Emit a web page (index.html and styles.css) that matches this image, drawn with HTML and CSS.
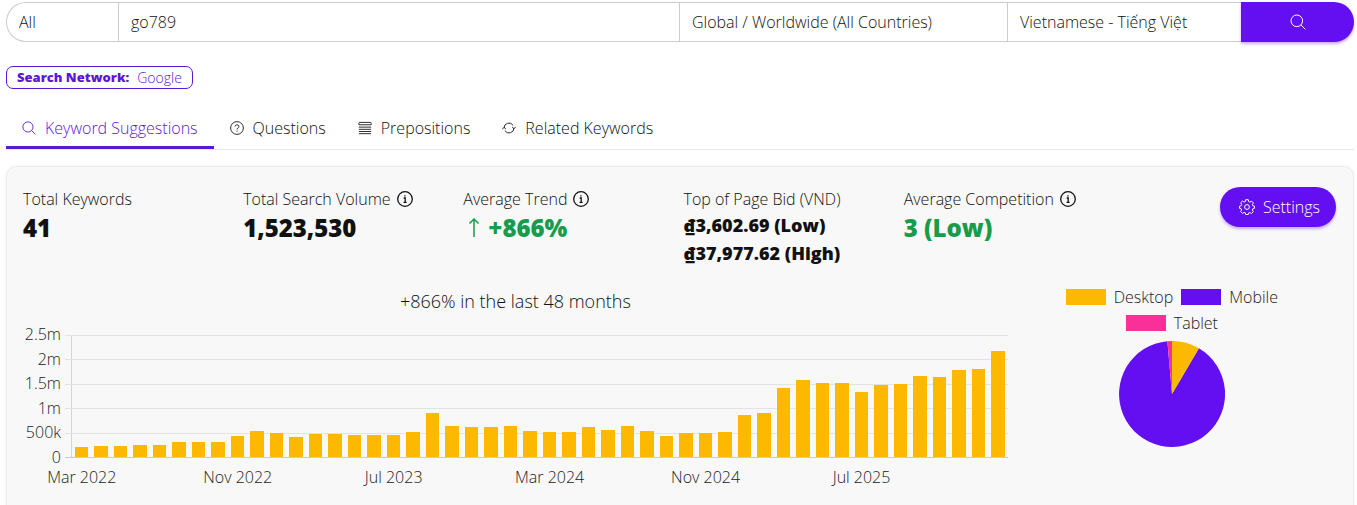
FILE: index.html
```html
<!DOCTYPE html>
<html lang="en">
<head>
<meta charset="utf-8">
<title>Keyword Suggestions</title>
<link rel="stylesheet" href="styles.css">
</head>
<body>
<svg class="sprite" aria-hidden="true">
  <symbol id="search" viewBox="0 0 16 16"><circle cx="6.8" cy="6.8" r="5.8"/><path d="M11 11l4.4 4.4"/></symbol>
  <symbol id="question" viewBox="0 0 16 16"><circle cx="8" cy="8" r="7.3"/><path d="M5.8 6.3a2.2 2 0 1 1 3.3 1.8C8.300 8.600 8 8.900 8 9.800M8 11v1.200"/></symbol>
  <symbol id="lines" viewBox="0 0 16 16"><path d="M1 4.300V2.500Q1 1.600 2 1.600H14Q15 1.600 15 2.500V4.300ZM1 7h14M1 9.500h14M1 12h14M1 14.500h14"/></symbol>
  <symbol id="refresh" viewBox="0 0 16 16"><path d="M2.300 8A5.700 5.700 0 0 1 12.800 5M13.700 8A5.700 5.700 0 0 1 3.200 11M.3 9.500L2.300 7.200 4.500 9.300M11.500 6.700L13.700 8.800 15.700 6.500"/></symbol>
  <symbol id="info" viewBox="0 0 16 16"><circle cx="8" cy="8" r="7.300"/><path d="M6.700 7h1.500v4.200M6.600 11.400h3"/><path d="M7.900 4.200v1.300"/></symbol>
  <symbol id="up" viewBox="0 0 12 20"><path d="M6 19V1M1.500 5.500L6 1l4.500 4.500"/></symbol>
  <symbol id="gear" viewBox="0 0 16 16"><circle cx="8" cy="8" r="2.400"/><path d="M6.700 .7h2.600l.4 1.900 1.200.5 1.700-1 1.800 1.800-1 1.700.5 1.200 1.500.3v2.300l-1.600.4-.5 1.200 1 1.700-1.800 1.800-1.700-1-1.200.5-.4 1.500H6.700l-.4-1.600-1.200-.5-1.700 1-1.800-1.800 1-1.700-.5-1.200-1.500-.3V7.100l1.600-.4.5-1.200-1-1.700 1.800-1.800 1.700 1 1.200-.5z"/></symbol>
</svg>

<form class="search-bar">
  <select class="field" aria-label="Category"><option>All</option></select>
  <input class="field" type="text" value="go789" aria-label="Keyword">
  <select class="field" aria-label="Location"><option>Global / Worldwide (All Countries)</option></select>
  <select class="field" aria-label="Language"><option>Vietnamese - Tiếng Việt</option></select>
  <button class="search-button" type="button" aria-label="Search"><svg class="icon icon-md"><use href="#search"/></svg></button>
</form>

<div class="network"><strong>Search Network:</strong><span>Google</span></div>

<nav class="tabs">
  <a class="tab tab-active" href="#"><svg class="icon"><use href="#search"/></svg>Keyword Suggestions</a>
  <a class="tab" href="#"><svg class="icon"><use href="#question"/></svg>Questions</a>
  <a class="tab" href="#"><svg class="icon"><use href="#lines"/></svg>Prepositions</a>
  <a class="tab" href="#"><svg class="icon"><use href="#refresh"/></svg>Related Keywords</a>
</nav>

<main class="panel">
  <section class="stats">
    <div class="stat"><div class="label">Total Keywords</div><div class="value">41</div></div>
    <div class="stat"><div class="label">Total Search Volume <svg class="icon icon-info"><use href="#info"/></svg></div><div class="value">1,523,530</div></div>
    <div class="stat"><div class="label">Average Trend <svg class="icon icon-info"><use href="#info"/></svg></div><div class="value good"><svg class="icon arrow"><use href="#up"/></svg>+866%</div></div>
    <div class="stat"><div class="label">Top of Page Bid (VND)</div><div class="bid">₫3,602.69 (Low)</div><div class="bid">₫37,977.62 (High)</div></div>
    <div class="stat"><div class="label">Average Competition <svg class="icon icon-info"><use href="#info"/></svg></div><div class="value good">3 (Low)</div></div>
    <button class="settings" type="button"><svg class="icon icon-md"><use href="#gear"/></svg>Settings</button>
  </section>

  <section class="charts">
    <div class="trend">
      <h2 class="chart-title">+866% in the last 48 months</h2>
      <div class="chart">
        <div class="y-axis"><span>2.5m</span><span>2m</span><span>1.5m</span><span>1m</span><span>500k</span><span>0</span></div>
        <div class="plot">
          <div class="grid-lines"><i></i><i></i><i></i><i></i><i></i><i></i></div>
          <div class="bars" id="bars"></div>
        </div>
        <div class="x-axis"><span>Mar 2022</span><span>Nov 2022</span><span>Jul 2023</span><span>Mar 2024</span><span>Nov 2024</span><span>Jul 2025</span></div>
      </div>
    </div>
    <div class="devices">
      <ul class="legend">
        <li><i class="swatch desktop"></i>Desktop</li>
        <li><i class="swatch mobile"></i>Mobile</li>
        <li><i class="swatch tablet"></i>Tablet</li>
      </ul>
      <svg class="pie" viewBox="0 0 106 106" role="img" aria-label="Searches by device">
        <path class="pie-mobile" d="M53 53L79.900 7.300A53 53 0 1 1 48.400 .2Z"/>
        <path class="pie-desktop" d="M53 53V0A53 53 0 0 1 79.900 7.300Z"/>
        <path class="pie-tablet" d="M53 53L48.400 .2A53 53 0 0 1 53 0Z"/>
      </svg>
    </div>
  </section>
</main>
<script src="chart.js"></script>
</body>
</html>
```

FILE: styles.css
```css
* { box-sizing: border-box; }

:root {
  --purple: #640ff2;
  --yellow: #fdb800;
  --pink: #f93098;
  --ink: #111;
}

body {
  margin: 0;
  padding: 2px 3px 0 6px;
  background: #fff;
  color: var(--ink);
  font: 300 16px/24px "Open Sans", "Noto Sans", sans-serif;
  overflow: hidden;
}

.sprite { display: block; width: 0; height: 0; }

.icon {
  flex: none;
  width: 14px;
  height: 14px;
  fill: none;
  stroke: currentColor;
  stroke-width: 1;
}
.icon-md { width: 16px; height: 16px; }

.search-bar {
  display: grid;
  grid-template-columns: 112fr 561fr 328fr 234fr 113fr;
  height: 40px;
}
.field {
  appearance: none;
  min-width: 0;
  margin: 0;
  padding: 0 12px;
  border: 1px solid #ccc;
  border-right: 0;
  border-radius: 0;
  background: #fff;
  color: inherit;
  font: inherit;
}
.field:first-child { border-radius: 20px 0 0 20px; }
.search-button, .settings {
  display: flex;
  align-items: center;
  justify-content: center;
  gap: 8px;
  border: 0;
  background: var(--purple);
  color: #fff;
  font: inherit;
  box-shadow: 0 2px 3px rgba(100, 15, 242, .35);
}
.search-button { border-radius: 0 20px 20px 0; }

.network {
  display: flex;
  gap: 8px;
  width: max-content;
  margin-top: 24px;
  padding: 0 10px;
  border: 1px solid #5c17d6;
  border-radius: 7px;
  color: #5c17d6;
  font-size: 14px;
  line-height: 21px;
}
.network strong { font-size: 13px; font-weight: 800; }

.tabs {
  display: flex;
  margin-top: 20px;
  border-bottom: 1px solid #e8e8e8;
}
.tab {
  display: flex;
  align-items: center;
  gap: 9px;
  height: 40px;
  padding: 0 16px;
  border-bottom: 3px solid transparent;
  color: inherit;
  text-decoration: none;
}
.tab-active { border-color: #5c17d6; color: #5c17d6; }

.panel {
  margin-top: 16px;
  padding: 20px 17px 32px 16px;
  border: 1px solid #ececec;
  border-radius: 10px;
  background: #f8f8f8;
  box-shadow: 0 0 4px rgba(0, 0, 0, .05);
}

.stats {
  display: grid;
  grid-template-columns: repeat(6, 1fr);
  gap: 8px;
  align-items: start;
}
.label { display: flex; align-items: center; gap: 6px; white-space: nowrap; }
.icon-info { width: 16px; height: 16px; stroke-width: 1.3; }
.value {
  display: flex;
  align-items: center;
  gap: 8px;
  font-size: 24px;
  font-weight: 800;
  line-height: 34px;
}
.good { color: #169c4b; }
.arrow { width: 12px; height: 20px; margin-left: 5px; stroke-width: 1.5; }
.bid { font-size: 18px; font-weight: 800; line-height: 28px; white-space: nowrap; }
.settings { justify-self: end; height: 40px; padding: 0 16px 0 19px; border-radius: 20px; }

.charts { display: grid; grid-template-columns: 3fr 1fr; margin-top: 20px; }
.chart-title { margin: 0; font-size: 18px; font-weight: 300; line-height: 28px; text-align: center; }
.chart {
  display: grid;
  grid-template-columns: 38px 1fr;
  column-gap: 4px;
  margin-top: 20px;
}
.y-axis {
  display: flex;
  flex-direction: column;
  justify-content: space-between;
  margin: -13px 0 -11px;
  text-align: right;
  color: #222;
}
.plot { display: grid; height: 123px; }
.grid-lines, .bars { grid-area: 1 / 1; }
.grid-lines {
  display: flex;
  flex-direction: column;
  justify-content: space-between;
  background: linear-gradient(#d4d4d4, #d4d4d4) 6px 0 / 1px 100% no-repeat;
}
.grid-lines i { height: 1px; background: #e3e3e3; }
.grid-lines i:last-child { background: #ccc; }
.bars {
  display: grid;
  grid-template-columns: repeat(48, 1fr);
  align-items: end;
  margin: 0 0 1px 7px;
}
.bar { margin: 0 3px; background: var(--yellow); }
.x-axis {
  grid-column: 2;
  display: grid;
  grid-template-columns: repeat(48, 1fr);
  margin: 7px 0 0 7px;
  color: #222;
}
.x-axis span { display: flex; justify-content: center; width: 100%; min-width: 0; white-space: nowrap; }
.x-axis span:nth-child(1) { grid-column: 1; }
.x-axis span:nth-child(2) { grid-column: 9; }
.x-axis span:nth-child(3) { grid-column: 17; }
.x-axis span:nth-child(4) { grid-column: 25; }
.x-axis span:nth-child(5) { grid-column: 33; }
.x-axis span:nth-child(6) { grid-column: 41; }

.devices { display: flex; flex-direction: column; align-items: center; }
.legend {
  display: flex;
  flex-wrap: wrap;
  justify-content: center;
  gap: 2px 8px;
  max-width: 240px;
  margin: -2px 0 0;
  padding: 0;
  list-style: none;
  color: #222;
}
.legend li { display: flex; align-items: center; gap: 8px; }
.swatch { width: 40px; height: 16px; }
.desktop { background: var(--yellow); }
.mobile { background: var(--purple); }
.tablet { background: var(--pink); }
.pie { width: 106px; height: 106px; margin-top: 6px; }
.pie-desktop { fill: var(--yellow); }
.pie-mobile { fill: var(--purple); }
.pie-tablet { fill: var(--pink); }
```

FILE: chart.js
```js
// Monthly search volume in thousands, Mar 2022 onwards.
const volumes = [
  215, 220, 225, 245, 255, 305, 305, 305, 435, 530, 500, 400,
  475, 475, 455, 445, 455, 520, 895, 630, 610, 610, 630, 535,
  520, 505, 615, 545, 640, 525, 425, 500, 500, 510, 855, 910,
  1415, 1580, 1515, 1520, 1330, 1470, 1490, 1665, 1645, 1785, 1810, 2170
];
const bars = document.getElementById("bars");
for (const volume of volumes) {
  const bar = document.createElement("div");
  bar.className = "bar";
  bar.style.height = volume / 25 + "%";
  bars.append(bar);
}
```
